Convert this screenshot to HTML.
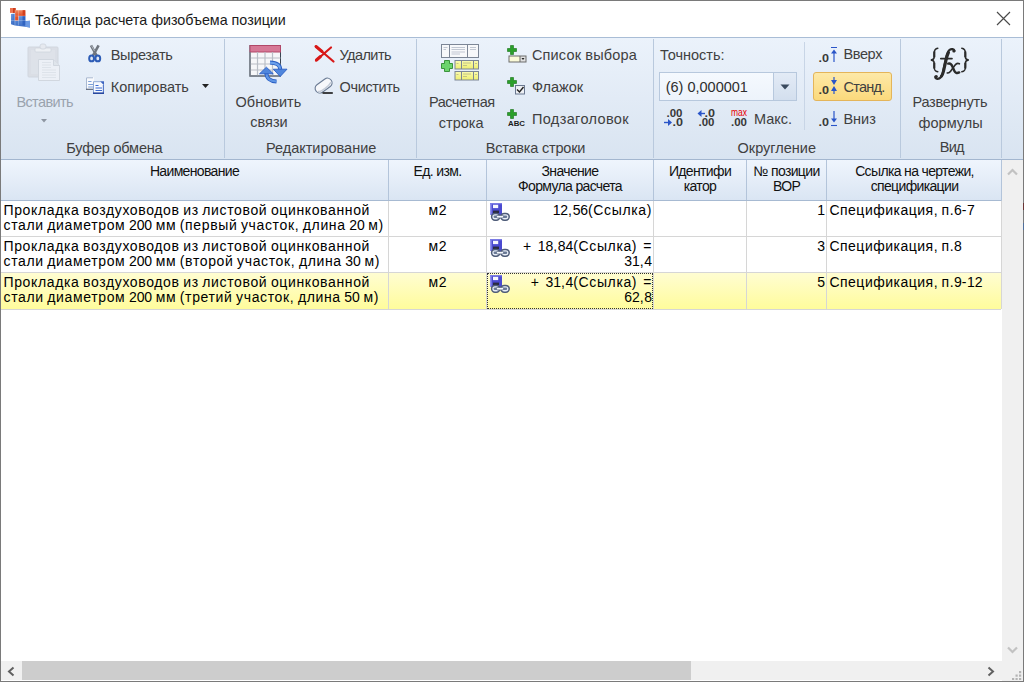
<!DOCTYPE html>
<html><head><meta charset="utf-8">
<style>
html,body{margin:0;padding:0;}
body{width:1024px;height:682px;position:relative;overflow:hidden;background:#fff;font-family:"Liberation Sans",sans-serif;}
.a{position:absolute;}
.t{position:absolute;white-space:pre;line-height:1;font-family:"Liberation Sans",sans-serif;}
.r{font-size:14.5px;color:#404040;}
.h{font-size:14px;color:#111;text-align:center;line-height:15.3px;letter-spacing:-0.65px;}
.g{font-size:14px;color:#000;letter-spacing:0.63px;word-spacing:-0.9px;line-height:15px;}
.d{letter-spacing:-0.07px;}
#frame{left:0;top:0;width:1024px;height:682px;box-sizing:border-box;border:1px solid #7a7a7a;z-index:50;pointer-events:none;}
#ribbon{left:1px;top:37px;width:1022px;height:123px;box-sizing:border-box;border-top:1px solid #a9bdd6;border-bottom:1px solid #a3b6cf;background:linear-gradient(#ebf2fb,#d9e4f1);}
.sep{position:absolute;width:1px;background:#b9c9dd;}
#hdr{left:1px;top:160px;width:1000px;height:41px;box-sizing:border-box;border-bottom:1px solid #a7bad2;background:linear-gradient(#eff5fd,#dae5f3);}
.hs{position:absolute;top:160px;height:40px;width:1px;background:#b3c4da;}
.row{position:absolute;left:1px;width:1000px;height:36px;box-sizing:border-box;border-bottom:1px solid #d6d6d6;}
.cs{position:absolute;width:1px;background:#d6d6d6;}
</style></head><body>
<div id="frame" class="a"></div>
<div class="a" style="left:1023px;top:203px;width:1px;height:7px;background:#6b3434;z-index:51"></div>
<div class="a" style="left:1023px;top:223px;width:1px;height:7px;background:#4f6f9c;z-index:51"></div>

<!-- title bar -->
<div class="t" style="left:35px;top:13.2px;font-size:14.3px;color:#1a1a1a;">Таблица расчета физобъема позиции</div>
<svg class="a" style="left:996px;top:11px" width="15" height="15" viewBox="0 0 15 15"><path d="M1 1L14 14M14 1L1 14" stroke="#4a4a4a" stroke-width="1.15" fill="none"/></svg>

<!-- ribbon -->
<div id="ribbon" class="a"></div>
<div class="sep" style="left:224px;top:39px;height:119px"></div>
<div class="sep" style="left:416px;top:39px;height:119px"></div>
<div class="sep" style="left:653px;top:39px;height:119px"></div>
<div class="sep" style="left:804px;top:42px;height:88px;background:#c8d5e6"></div>
<div class="sep" style="left:900px;top:39px;height:119px"></div>
<div class="sep" style="left:1001px;top:39px;height:119px"></div>

<!-- clipboard group -->
<div class="t r" style="letter-spacing:-0.6px;left:16.4px;top:95.2px;color:#9aa3ae">Вставить</div>
<div class="t r" style="letter-spacing:-0.35px;left:110.8px;top:47.7px">Вырезать</div>
<div class="t r" style="left:110.8px;top:80.2px">Копировать</div>
<div class="t r" style="letter-spacing:-0.2px;left:66.3px;top:140.6px">Буфер обмена</div>

<!-- edit group -->
<div class="t r" style="left:235.6px;top:95.2px">Обновить</div>
<div class="t r" style="left:250.3px;top:115.2px">связи</div>
<div class="t r" style="letter-spacing:-0.55px;left:339.5px;top:48px">Удалить</div>
<div class="t r" style="letter-spacing:-0.35px;left:339.5px;top:79.8px">Очистить</div>
<div class="t r" style="left:265.9px;top:140.6px">Редактирование</div>

<!-- insert group -->
<div class="t r" style="left:429px;top:95.3px;letter-spacing:-0.5px">Расчетная</div>
<div class="t r" style="left:438.8px;top:115.6px">строка</div>
<div class="t r" style="letter-spacing:0.15px;left:532px;top:47.5px">Список выбора</div>
<div class="t r" style="left:532px;top:79.5px">Флажок</div>
<div class="t r" style="letter-spacing:0.35px;left:532px;top:111.7px">Подзаголовок</div>
<div class="t r" style="letter-spacing:-0.2px;left:485.7px;top:140.6px">Вставка строки</div>

<!-- rounding group -->
<div class="t r" style="left:660px;top:47.7px">Точность:</div>
<div class="t r" style="left:754px;top:112.1px">Макс.</div>
<div class="t r" style="letter-spacing:-0.35px;left:843.4px;top:47.2px">Вверх</div>
<div class="t r" style="left:843.4px;top:112px">Вниз</div>
<div class="t r" style="left:737.6px;top:140.6px">Округление</div>

<!-- view group -->
<div class="t r" style="left:912.4px;top:95.4px;letter-spacing:-0.2px">Развернуть</div>
<div class="t r" style="left:918.6px;top:115.9px">формулы</div>
<div class="t r" style="letter-spacing:-0.8px;left:939.8px;top:140.4px">Вид</div>


<!-- scrollbars -->
<div class="a" style="left:1002px;top:160px;width:21px;height:501px;background:#f0f0f0"></div>
<svg class="a" style="left:1007px;top:167.5px" width="11" height="8" viewBox="0 0 11 8"><path d="M1 6.5L5.5 2L10 6.5" stroke="#c2c2c2" stroke-width="2.2" fill="none"/></svg>
<svg class="a" style="left:1007px;top:646px" width="11" height="8" viewBox="0 0 11 8"><path d="M1 1.5L5.5 6L10 1.5" stroke="#c2c2c2" stroke-width="2.2" fill="none"/></svg>
<div class="a" style="left:1px;top:661px;width:1001px;height:19px;background:#f0f0f0"></div>
<div class="a" style="left:1002px;top:661px;width:21px;height:20px;background:#f0f0f0"></div>
<div class="a" style="left:22px;top:661px;width:669px;height:19px;background:#cdcdcd"></div>
<svg class="a" style="left:6px;top:665.5px" width="10" height="11" viewBox="0 0 10 11"><path d="M7.5 1.5L3 5.5L7.5 9.5" stroke="#606060" stroke-width="2" fill="none"/></svg>
<svg class="a" style="left:986px;top:665.5px" width="10" height="11" viewBox="0 0 10 11"><path d="M2.5 1.5L7 5.5L2.5 9.5" stroke="#606060" stroke-width="2" fill="none"/></svg>
<svg class="a" style="left:1011px;top:670px" width="11" height="10" viewBox="0 0 11 10"><g fill="#b4b4b4"><rect x="8" y="1" width="2.2" height="2.2"/><rect x="4.5" y="4.5" width="2.2" height="2.2"/><rect x="8" y="4.5" width="2.2" height="2.2"/><rect x="1" y="8" width="2.2" height="2.2"/><rect x="4.5" y="8" width="2.2" height="2.2"/><rect x="8" y="8" width="2.2" height="2.2"/></g></svg>

<!-- combo -->
<div class="a" style="left:659px;top:72px;width:138px;height:29px;box-sizing:border-box;border:1px solid #b7c8dd;background:linear-gradient(#f5f9fe,#edf3fb)"></div>
<div class="a" style="left:773px;top:73px;width:23px;height:27px;box-sizing:border-box;border-left:1px solid #b7c8dd;background:linear-gradient(#e3ebf6,#d3dfee)"></div>
<svg class="a" style="left:780px;top:84px" width="10" height="6" viewBox="0 0 10 6"><path d="M0.5 0.5H9.5L5 5.5Z" fill="#3a4a5e"/></svg>
<div class="t r" style="left:665.7px;top:80px;color:#2e2e2e">(6) 0,000001</div>

<!-- Станд. button -->
<div class="a" style="left:813px;top:72px;width:79px;height:29px;box-sizing:border-box;border:1px solid #e4b55a;border-radius:3px;background:linear-gradient(#fde9a8,#fbd97c)"></div>
<div class="t r" style="letter-spacing:-0.7px;left:843.4px;top:79.5px">Станд.</div>

<!-- grid header -->
<div id="hdr" class="a"></div>
<div class="hs" style="left:388px"></div>
<div class="hs" style="left:486px"></div>
<div class="hs" style="left:653px"></div>
<div class="hs" style="left:746px"></div>
<div class="hs" style="left:826px"></div>
<div class="hs" style="left:1001px;height:41px"></div>
<div class="cs" style="left:1001px;top:201px;height:108px"></div>

<!-- rows -->
<div class="row" style="top:201px;height:36px"></div>
<div class="row" style="top:237px;height:36px"></div>
<div class="row" style="top:273px;height:37px;background:linear-gradient(#fffdd2,#fffc9c);border-top:0"></div>
<div class="cs" style="left:388px;top:201px;height:108px"></div>
<div class="cs" style="left:486px;top:201px;height:108px"></div>
<div class="cs" style="left:653px;top:201px;height:108px"></div>
<div class="cs" style="left:746px;top:201px;height:108px"></div>
<div class="cs" style="left:826px;top:201px;height:108px"></div>


<!-- header text -->
<div class="t h" style="left:1px;width:387px;top:163.7px">Наименование</div>
<div class="t h" style="left:389px;width:97px;top:163.7px">Ед. изм.</div>
<div class="t h" style="left:487px;width:166px;top:163.7px">Значение
Формула расчета</div>
<div class="t h" style="left:654px;width:92px;top:163.7px">Идентифи
катор</div>
<div class="t h" style="left:747px;width:79px;top:163.7px">№ позиции
ВОР</div>
<div class="t h" style="left:827px;width:175px;top:163.7px">Ссылка на чертежи,
спецификации</div>

<!-- row text -->
<div class="t g" style="left:3.5px;top:202.5px">Прокладка воздуховодов из листовой оцинкованной
стали диаметром <span class="d">200</span> мм (первый участок, длина <span class="d">20</span> м)</div>
<div class="t g" style="left:3.5px;top:238.5px">Прокладка воздуховодов из листовой оцинкованной
стали диаметром <span class="d">200</span> мм (второй участок, длина <span class="d">30</span> м)</div>
<div class="t g" style="left:3.5px;top:274.5px">Прокладка воздуховодов из листовой оцинкованной
стали диаметром <span class="d">200</span> мм (третий участок, длина <span class="d">50</span> м)</div>
<div class="t g" style="left:389px;width:97px;text-align:center;top:202.5px">м<span class="d">2</span></div>
<div class="t g" style="left:389px;width:97px;text-align:center;top:238.5px">м<span class="d">2</span></div>
<div class="t g" style="left:389px;width:97px;text-align:center;top:274.5px">м<span class="d">2</span></div>
<div class="t g" style="word-spacing:1.5px;left:487px;width:165px;text-align:right;top:202.5px"><span class="d">12</span>,<span class="d">56</span>(Ссылка)</div>
<div class="t g" style="word-spacing:1.5px;left:487px;width:165px;text-align:right;top:238.5px">+ <span class="d">18</span>,<span class="d">84</span>(Ссылка) =
<span class="d">31</span>,<span class="d">4</span></div>
<div class="t g" style="word-spacing:1.5px;left:487px;width:165px;text-align:right;top:274.5px">+ <span class="d">31</span>,<span class="d">4</span>(Ссылка) =
<span class="d">62</span>,<span class="d">8</span></div>
<div class="t g" style="left:747px;width:78px;text-align:right;top:202.5px"><span class="d">1</span></div>
<div class="t g" style="left:747px;width:78px;text-align:right;top:238.5px"><span class="d">3</span></div>
<div class="t g" style="left:747px;width:78px;text-align:right;top:274.5px"><span class="d">5</span></div>
<div class="t g" style="letter-spacing:0.5px;left:829.4px;top:202.5px">Спецификация, п.<span class="d">6</span>-<span class="d">7</span></div>
<div class="t g" style="letter-spacing:0.5px;left:829.4px;top:238.5px">Спецификация, п.<span class="d">8</span></div>
<div class="t g" style="letter-spacing:0.5px;left:829.4px;top:274.5px">Спецификация, п.<span class="d">9</span>-<span class="d">12</span></div>

<!-- icons overlay -->
<svg class="a" style="left:0;top:0;z-index:5" width="1024" height="682" viewBox="0 0 1024 682">
<defs>
 <linearGradient id="gblue" x1="0" y1="0" x2="0" y2="1"><stop offset="0" stop-color="#6f9be0"/><stop offset="1" stop-color="#3a6cc4"/></linearGradient>
 <linearGradient id="gred" x1="0" y1="0" x2="0" y2="1"><stop offset="0" stop-color="#f08860"/><stop offset="1" stop-color="#e0502a"/></linearGradient>
 <linearGradient id="gyel" x1="0" y1="0" x2="0" y2="1"><stop offset="0" stop-color="#fbfbb0"/><stop offset="1" stop-color="#eeee70"/></linearGradient>
 <linearGradient id="gpaper" x1="0" y1="0" x2="0" y2="1"><stop offset="0" stop-color="#ffffff"/><stop offset="1" stop-color="#e8ecf2"/></linearGradient>
</defs>
<!-- title icon -->
<g>
 <path d="M11 14L15 13.5V20.5H18.5V16H25.3V21L30 20.8V27.4L25 26.8L15 25.5L11 24.2Z" fill="url(#gblue)"/>
 <path d="M25 21.2L30 20.8V27.4L25 26.8Z" fill="#6a98e2"/>
 <path d="M22.5 16H25.3V25.6L22.5 25.3Z" fill="#2f62c0"/>
 <path d="M13.2 14V24.5" stroke="#2a5cb8" stroke-width="0.8" stroke-opacity="0.6"/>
 <rect x="10" y="8" width="5.6" height="4.9" fill="#ee7450"/>
 <rect x="13" y="8" width="2.6" height="4.9" fill="#cc3c1c"/>
 <rect x="15" y="10.2" width="10.3" height="5.8" fill="url(#gred)"/>
 <rect x="22.6" y="10.2" width="2.7" height="5.8" fill="#d4401e"/>
 <rect x="15" y="15.8" width="3.5" height="4.7" fill="#e2502a"/>
 <path d="M15 10.2V25.5M18.5 10.2V25.5M11 20.5H25.3M15 16H25.3" stroke="#ffffff" stroke-opacity="0.4" stroke-width="0.6"/>
</g>
<!-- paste (disabled) -->
<g opacity="0.9">
 <rect x="28" y="47" width="30" height="30" rx="1" fill="#d9dde4" stroke="#cfd4dc"/>
 <rect x="31" y="50" width="24" height="24" fill="#dde1e8"/>
 <rect x="35" y="48" width="16" height="4" rx="1" fill="#eef0f4" stroke="#cdd2da" stroke-width="0.8"/>
 <rect x="40" y="44" width="6" height="5" rx="2" fill="#e6e9ee" stroke="#cdd2da" stroke-width="0.8"/>
 <path d="M38.5 59.5H53.5L59.5 65.5V80.5H38.5Z" fill="#edf1f6" stroke="#cfd5dd"/>
 <path d="M53.5 59.5V65.5H59.5" fill="#dfe4ea" stroke="#cfd5dd"/>
 <path d="M42 62.5H51M42 65H51M42 67.5H51M42 70H56M42 72.5H56M42 75H56M42 77.5H56" stroke="#d8dee6" stroke-width="0.8"/>
</g>
<!-- paste arrow -->
<path d="M41 119H47L44 122.5Z" fill="#8e96a2"/>
<!-- scissors -->
<g>
 <path d="M91 45.3L96.6 55.6M98.6 45.3L93 55.6" stroke="#70767f" stroke-width="2.6"/>
 <path d="M91.4 45.5L94.5 51" stroke="#b8bec6" stroke-width="0.9"/>
 <ellipse cx="91.6" cy="58.4" rx="2.4" ry="2.9" fill="#dfe6f2" stroke="#2d5cb6" stroke-width="2"/>
 <ellipse cx="97.8" cy="58.4" rx="2.4" ry="2.9" fill="#dfe6f2" stroke="#2d5cb6" stroke-width="2"/>
</g>
<!-- copy -->
<g>
 <rect x="86" y="77.3" width="8" height="12.5" fill="#f8f9fc"/>
 <path d="M86.5 89.5V77.8H93" fill="none" stroke="#a8b8d0" stroke-width="1"/>
 <path d="M86 89.3H94" stroke="#5a6478" stroke-width="1.2"/>
 <path d="M88.2 81.5H91.5M88.2 84.5H93M88.2 87H93" stroke="#7aa0d8" stroke-width="1.2"/>
 <rect x="93" y="81.2" width="11" height="12.6" fill="#f6f9fe"/>
 <path d="M93.5 93.5V81.7H100.5" fill="none" stroke="#8ea8d4" stroke-width="1"/>
 <path d="M100 81.2L104 85.2V81.2Z" fill="#3c64c0"/>
 <path d="M103.4 85V93.5" stroke="#5a7cc8" stroke-width="1.2"/>
 <path d="M93 93.2H104" stroke="#2848a0" stroke-width="1.6"/>
 <path d="M95.5 85.5H98.5M95.5 88H102M95.5 90.5H102" stroke="#3a6ad0" stroke-width="1.1"/>
</g>
<!-- copy arrow -->
<path d="M202 84H209L205.5 88Z" fill="#222"/>
<!-- table refresh -->
<g>
 <rect x="250" y="45.5" width="30.5" height="30.5" fill="#f6f7f9" stroke="#3a4452" stroke-width="1"/>
 <rect x="250" y="45.5" width="30.5" height="6.5" fill="#d67896" stroke="#b04868" stroke-width="1"/>
 <path d="M257.5 52V76M265 52V76M272.5 52V76M250 58H280.5M250 64H280.5M250 70H280.5" stroke="#b9bec6" stroke-width="1.2"/>
 <path d="M250 52V76H280.5" fill="none" stroke="#7a818c" stroke-width="1.4"/>
 <path d="M266.4 73C266.4 78 270 81.2 276.5 81.5" fill="none" stroke="#2b5fc4" stroke-width="4"/>
 <path d="M266.4 73C266.4 78 270 81.2 276.5 81.5" fill="none" stroke="#5f95e4" stroke-width="2.2"/>
 <path d="M259.5 73.8L266.4 67.2L273.3 73.8Z" fill="#4f86dc" stroke="#2b5fc4" stroke-width="0.9" stroke-linejoin="round"/>
 <path d="M280.2 69.5C280.2 65 276.5 62.8 270 62.6" fill="none" stroke="#2b5fc4" stroke-width="4"/>
 <path d="M280.2 69.5C280.2 65 276.5 62.8 270 62.6" fill="none" stroke="#6ba0ea" stroke-width="2.2"/>
 <path d="M273.3 69.2L280.2 76.5L287 69.2Z" fill="#4f86dc" stroke="#2b5fc4" stroke-width="0.9" stroke-linejoin="round"/>
</g>
<!-- delete X -->
<path d="M316 46.5L333.5 61.5M331 47.5L316 60.5" stroke="#d81818" stroke-width="2.2" stroke-linecap="round"/><path d="M316 46.5L322 51.5M316.5 60L320.5 56.5" stroke="#d81818" stroke-width="3" stroke-linecap="round"/>
<!-- eraser -->
<g>
 <g transform="translate(323.6 85.6) rotate(-36)">
  <rect x="-9.3" y="-4.6" width="18.6" height="9.2" rx="4.4" fill="#f7f8fb" stroke="#6a7b94" stroke-width="1.1"/>
  <path d="M-8 1.5C-6 3.6 4 3.8 8.2 1.5" fill="none" stroke="#c4ccd8" stroke-width="1.6"/>
 </g>
 <path d="M322.5 93H332.8" stroke="#151515" stroke-width="1.6"/>
</g>
<!-- calc row icon -->
<g>
 <rect x="441.5" y="44.5" width="37" height="13" fill="#f7f8fa" stroke="#7c8696"/>
 <path d="M449.5 44.5V57.5M467.5 44.5V57.5" stroke="#7c8696"/>
 <path d="M443.5 47.5H447.5M443.5 49.5H446M451.5 47.5H465M451.5 49.5H465M451.5 52H465M451.5 54H460M470 47.5H476M470 49.5H476" stroke="#a9b2c0" stroke-width="0.7"/>
 <rect x="455" y="60.5" width="23.5" height="8.5" fill="url(#gyel)" stroke="#7c8696"/>
 <path d="M461.5 60.5V69M473.5 60.5V69" stroke="#7c8696"/>
 <rect x="455" y="71.5" width="23.5" height="8.5" fill="url(#gyel)" stroke="#7c8696"/>
 <path d="M461.5 71.5V80M473.5 71.5V80" stroke="#7c8696"/>
 <path d="M456.5 63.5H458.5M463 63H471M463 65.5H467M456.5 74.5H458.5M463 74H471M463 76.5H467M475 63.5H477M475 74.5H477" stroke="#b8b880" stroke-width="0.8"/>
 <path d="M444.5 60.5H449.5V63.5H452.5V68.5H449.5V71.5H444.5V68.5H441.5V63.5H444.5Z" fill="#6cd46c" stroke="#2f8a2f" stroke-width="0.9"/>
</g>
<!-- plus + combo -->
<g>
 <path d="M510.5 45.5H513.5V48.5H516.5V51.5H513.5V54.5H510.5V51.5H507.5V48.5H510.5Z" fill="#2aa02a" stroke="#147014" stroke-width="0.6"/>
 <rect x="508.5" y="55.5" width="18" height="7" fill="#6c6c6c"/>
 <rect x="509.5" y="56.5" width="10" height="5" fill="#fafad8"/>
 <rect x="520.5" y="56.5" width="5" height="5" fill="#e0e0e0"/>
 <path d="M521.5 58H524.5L523 60Z" fill="#222"/>
</g>
<!-- plus + checkbox -->
<g>
 <path d="M510.5 77.5H513.5V80.5H516.5V83.5H513.5V86.5H510.5V83.5H507.5V80.5H510.5Z" fill="#2aa02a" stroke="#147014" stroke-width="0.6"/>
 <rect x="515.5" y="85.5" width="9" height="8.5" fill="#eef0f4" stroke="#6a7890"/>
 <path d="M517 89.5L519.5 92L523.5 87" stroke="#222" stroke-width="1.4" fill="none"/>
</g>
<!-- plus + ABC -->
<g>
 <path d="M510.5 109.5H513.5V112.5H516.5V115.5H513.5V118.5H510.5V115.5H507.5V112.5H510.5Z" fill="#2aa02a" stroke="#147014" stroke-width="0.6"/>
 <text x="508" y="125.6" font-family="Liberation Sans" font-weight="bold" font-size="8" fill="#1a1a1a" textLength="17" lengthAdjust="spacingAndGlyphs">ABC</text>
</g>
<!-- rounding small icons -->
<g font-family="Liberation Sans" font-weight="bold" fill="#383838">
 <text x="666.5" y="117" font-size="10.5" textLength="16" lengthAdjust="spacingAndGlyphs">.00</text>
 <text x="672.5" y="125.8" font-size="10.5" textLength="10.5" lengthAdjust="spacingAndGlyphs">.0</text>
 <text x="704.5" y="117" font-size="10.5" textLength="10.5" lengthAdjust="spacingAndGlyphs">.0</text>
 <text x="698.5" y="125.8" font-size="10.5" textLength="16" lengthAdjust="spacingAndGlyphs">.00</text>
 <text x="731" y="116" font-size="11" fill="#e80000" font-weight="normal" textLength="16" lengthAdjust="spacingAndGlyphs">max</text>
 <text x="731" y="125.8" font-size="10.5" textLength="16" lengthAdjust="spacingAndGlyphs">.00</text>
 <text x="818.5" y="61.8" font-size="10.5" textLength="10.5" lengthAdjust="spacingAndGlyphs">.0</text>
 <text x="818.5" y="94.2" font-size="10.5" textLength="10.5" lengthAdjust="spacingAndGlyphs">.0</text>
 <text x="818.5" y="126.2" font-size="10.5" textLength="10.5" lengthAdjust="spacingAndGlyphs">.0</text>
</g>
<g fill="#2a55c8" stroke="#2a55c8">
 <path d="M664 122.5H669" stroke-width="1.4"/><path d="M668 119L672 122.5L668 126Z" stroke="none"/>
 <path d="M701 113.5H705" stroke-width="1.4"/><path d="M701.5 110L697.5 113.5L701.5 117Z" stroke="none"/>
</g>
<g stroke="#2a55c8" fill="#2a55c8">
 <path d="M831 47.5H837" stroke-width="1"/><path d="M834 51V62" stroke-width="1.2"/><path d="M831 53.5L834 49.5L837 53.5Z" stroke="none"/>
 <path d="M834 77V82" stroke-width="1.2"/><path d="M831 80L834 85L837 80Z" stroke="none"/>
 <path d="M834 89V94" stroke-width="1.2"/><path d="M831 91L834 86L837 91Z" stroke="none"/>
 <path d="M834 111V121" stroke-width="1.2"/><path d="M831 118.5L834 122.5L837 118.5Z" stroke="none"/><path d="M831 125.5H837" stroke-width="1.1"/>
</g>
<!-- fx -->
<g fill="none" stroke="#2b2b2b" stroke-linecap="round">
 <path d="M937.8 48.3C934.6 48.6 934.2 50.5 934.2 53.5V57C934.2 59.2 933.2 59.8 930.8 60C933.2 60.2 934.2 60.8 934.2 63V66.8C934.2 69.8 934.6 71.4 937.8 71.7" stroke-width="1.5"/>
 <path d="M961.8 48.3C965 48.6 965.4 50.5 965.4 53.5V57C965.4 59.2 966.4 59.8 968.8 60C966.4 60.2 965.4 60.8 965.4 63V66.8C965.4 69.8 965 71.4 961.8 71.7" stroke-width="1.5"/>
 <path d="M954.6 51C953.8 49 951.5 48.5 949.6 49.8C947.2 51.5 946.6 55 945.6 59.5L942.8 72.5C942 76.3 940 79 937.3 78.8C935.7 78.7 935 77.6 935.3 76.6" stroke-width="2.2"/><path d="M948.5 52.5C947.2 55 946.6 57.5 946 60.5L943.5 71.5C943 73.5 942.3 75 941.5 76" stroke-width="3"/>
 <path d="M940.8 58.6H952" stroke-width="1.7"/>
 <path d="M948.2 63.6C950.2 62.9 951.4 64 952.3 66.3L954.4 71C955.2 72.8 956.8 73.5 959.2 72.4" stroke-width="2.4"/>
 <path d="M959.4 63.8C957.8 62.8 956.3 63.3 954.9 65.2L950.6 71.2C949.6 72.6 948.6 73.3 947.3 72.9" stroke-width="1.6"/>
</g>
<g fill="#2b2b2b"><circle cx="953.8" cy="51" r="1.5"/><circle cx="936.3" cy="76.6" r="1.5"/></g>
<g fill="none" stroke="#2b2b2b" stroke-width="2.1"><path d="M934.3 51.5V57.3M934.3 62.7V68.5M965.3 51.5V57.3M965.3 62.7V68.5"/></g>
<!-- link icons -->
<g id="lnk">
 <rect x="490" y="203.3" width="12" height="11.7" fill="#4a4ad0"/>
 <rect x="490" y="203.3" width="1.6" height="11.7" fill="#9090ee"/>
 <rect x="490" y="203.3" width="12" height="1" fill="#7a7ae8"/>
 <rect x="493" y="204.8" width="5.2" height="3.3" fill="#f6f6ff"/>
 <rect x="493" y="210.6" width="6" height="2.4" fill="#2a2a40"/>
 <rect x="491.6" y="213.4" width="8.2" height="6.8" rx="3.4" fill="#e8eef8" stroke="#4e5c78" stroke-width="1.5"/>
 <rect x="500.8" y="213.4" width="8.4" height="6.8" rx="3.4" fill="#e8eef8" stroke="#4e5c78" stroke-width="1.5"/>
 <rect x="493.6" y="215.6" width="4.4" height="2.4" rx="1.2" fill="#6a7a96"/>
 <rect x="502.8" y="215.6" width="4.4" height="2.4" rx="1.2" fill="#6a7a96"/>
 <rect x="496.4" y="215.4" width="7.2" height="2.6" rx="1.2" fill="#f4f7fc" stroke="#50607c" stroke-width="0.8"/>
</g>
<use href="#lnk" x="0" y="36"/>
<use href="#lnk" x="0" y="72"/>
</svg>
<div class="a" style="left:487px;top:273px;width:166px;height:36px;box-sizing:border-box;border:1px dotted #333;z-index:6"></div>
</body></html>
